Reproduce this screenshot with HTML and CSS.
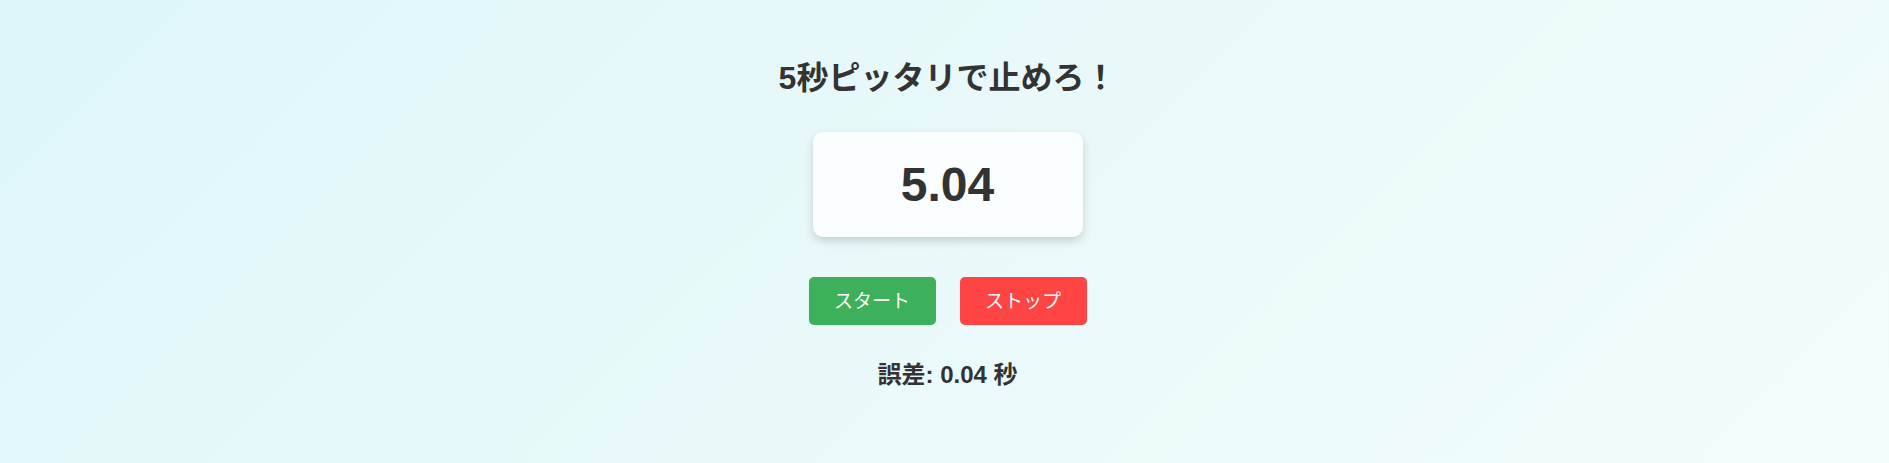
FILE: index.html
```html
<!DOCTYPE html>
<html lang="ja">
<head>
<meta charset="utf-8">
<title>5秒ピッタリで止めろ！</title>
<link rel="stylesheet" href="styles.css">
</head>
<body>
  <main class="app">
    <h1 class="title">5秒ピッタリで止めろ！</h1>
    <div class="timer">5.04</div>
    <div class="controls">
      <button class="btn btn-start" type="button">スタート</button>
      <button class="btn btn-stop" type="button">ストップ</button>
    </div>
    <p class="result">誤差: 0.04 秒</p>
  </main>
</body>
</html>
```
FILE: styles.css
```css
html, body {
  margin: 0;
  padding: 0;
}

body {
  min-height: 100vh;
  background: linear-gradient(135deg, #def6f9 0%, #e9f9fa 50%, #f2fcfc 100%);
  font-family: "Liberation Sans", "Noto Sans CJK JP", sans-serif;
  color: #333333;
}

.app {
  display: flex;
  flex-direction: column;
  align-items: center;
  padding: 58px 0 0 6px;
  text-align: center;
}

.title {
  margin: 0;
  font-size: 32px;
  line-height: 40px;
  font-weight: 700;
}

.timer {
  margin-top: 34px;
  width: 270px;
  height: 105px;
  line-height: 105px;
  font-size: 48px;
  font-weight: 700;
  background: #fafeff;
  border-radius: 10px;
  box-shadow: 0 4px 10px rgba(0, 0, 0, 0.16);
}

.controls {
  margin-top: 40px;
  display: flex;
  gap: 24px;
}

.btn {
  font-family: "Liberation Sans", "Noto Sans CJK JP", sans-serif;
  font-size: 19px;
  line-height: 24px;
  padding: 13px 0 11px;
  width: 127px;
  border: none;
  border-radius: 5px;
  color: #ffffff;
  cursor: pointer;
}

.btn-start {
  background: #3cb05a;
}

.btn-stop {
  background: #ff4444;
}

.result {
  margin: 35px 0 0;
  font-size: 24px;
  line-height: 30px;
  font-weight: 700;
}
```
